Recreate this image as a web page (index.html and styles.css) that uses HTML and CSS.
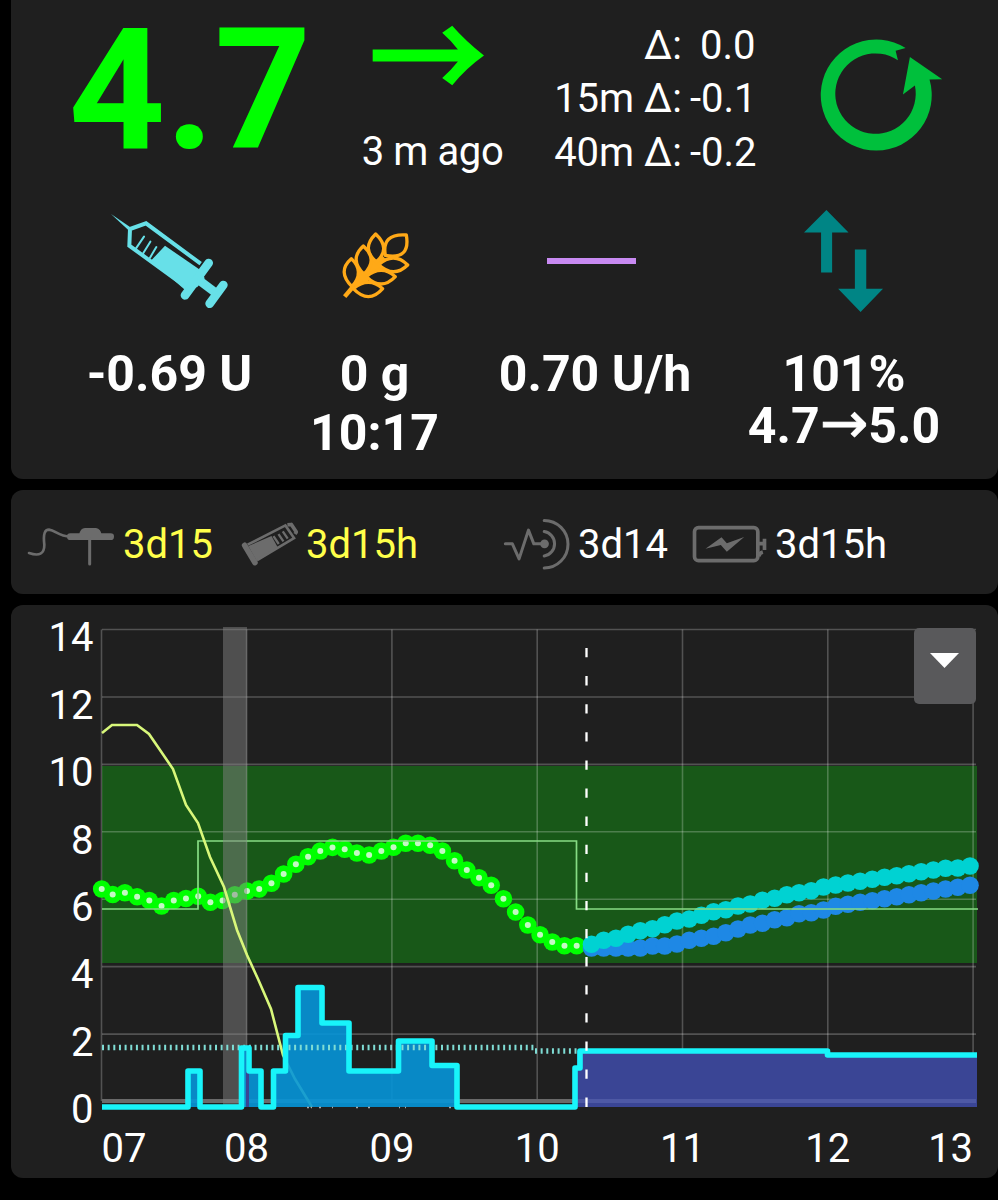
FILE: index.html
```html
<!DOCTYPE html>
<html lang="en">
<head>
    <meta charset="UTF-8">
    <meta name="viewport" content="width=device-width, initial-scale=1.0">
    <title>Overview</title>
    <link rel="stylesheet" href="styles.css">
</head>
<body>
    <section class="card overview">
        <div class="top-row">
            <div class="bg-value">4.7</div>
            <div class="trend">
                <svg class="trend-arrow" viewBox="0 0 338 182"><path fill="#00ff00" d="M2 73H257Q235 45 210 23L240 2Q280 48 335 91Q280 130 240 180L210 158Q235 137 257 109H2Z"/></svg>
                <div class="ago">3 m ago</div>
            </div>
            <div class="deltas">
                <span class="delta-label">Δ:</span><span class="delta-zero">0.0</span>
                <span class="delta-label">15m Δ:</span><span>-0.1</span>
                <span class="delta-label">40m Δ:</span><span>-0.2</span>
            </div>
            <svg class="loop-icon" viewBox="0 0 372 340"><path fill="#00c03c" d="M260 30L230 38L237 67A121 121 0 1 0 288 143L252 170L273 57L370 124L332 125A167 167 0 1 1 260 30Z"/></svg>
        </div>

        <div class="info-row">
            <div class="info iob">
                <div class="info-icon">
                    <svg width="118" height="96" viewBox="0 0 354 288" fill="none" stroke="#67e0e8">
                        <path d="M3 3L60 42L54 50Z" fill="#67e0e8" stroke="none"/>
                        <path d="M272 152L108 31L60 48L58 98L228 222" stroke-width="12"/>
                        <path d="M165 98L272 172L284 196L262 222L226 232L124 142Z" fill="#67e0e8" stroke="none"/>
                        <path d="M78 106L102 71M100 120L121 86M120 134L139 102" stroke-width="6" stroke-linecap="round"/>
                        <path d="M296 150L225 247M340 216L299 272" stroke-width="26" stroke-linecap="round"/>
                        <path d="M262 198L318 240" stroke-width="26"/>
                    </svg>
                </div>
                <div>-0.69 U</div>
            </div>
            <div class="info cob">
                <div class="info-icon">
                    <svg width="68" height="67" viewBox="0 0 204 201" fill="#1f1f1f" stroke="#ffa917" stroke-width="10" stroke-linejoin="round">
                        <path d="M8 194L30 168" stroke-width="13"/>
                        <path d="M36 160L126 76" stroke-width="38"/>
                        <path d="M130 70Q118 4 193 9Q206 84 130 70Z"/>
                        <path d="M103 90Q56 50 101 6Q148 50 103 90Z"/>
                        <path d="M66 126Q20 82 64 42Q110 84 66 126Z"/>
                        <path d="M30 164Q-16 118 28 80Q70 120 30 164Z"/>
                        <path d="M110 98Q155 58 197 99Q155 140 110 98Z"/>
                        <path d="M73 134Q118 96 160 134Q118 178 73 134Z"/>
                        <path d="M34 170Q80 132 122 170Q80 218 34 170Z"/>
                    </svg>
                </div>
                <div>0 g</div>
                <div>10:17</div>
            </div>
            <div class="info basal">
                <div class="info-icon"><div class="basal-line"></div></div>
                <div>0.70 U/h</div>
            </div>
            <div class="info sens">
                <div class="info-icon">
                    <svg width="79" height="102" viewBox="0 0 236 304" fill="#008585">
                        <path d="M0 67L67 0L133 67H84V186H51V67Z"/>
                        <path d="M152 118H186V235H236L169 304L102 235H152Z"/>
                    </svg>
                </div>
                <div>101%</div>
                <div class="target">4.7<span class="arrow">→</span>5.0</div>
            </div>
        </div>
    </section>

    <section class="card status">
        <div class="status-item warn">
            <svg width="88" height="40" viewBox="0 0 264 118" fill="none" stroke="#6c6c6c" stroke-width="8" stroke-linecap="round">
                <path d="M6 80Q52 96 52 56C48 20 54 10 66 10C86 12 94 30 130 31"/>
                <path d="M130 31H251" stroke-width="20"/>
                <path d="M156 26Q160 5 174 5H207Q222 8 224 26Z" fill="#6c6c6c" stroke="none"/>
                <path d="M188 34V113" stroke-width="9"/>
            </svg>
            <span>3d15</span>
        </div>
        <div class="status-item warn">
            <svg width="57" height="44" viewBox="0 0 172 132" fill="none" stroke="#6c6c6c">
                <path d="M11 70L42 122" stroke-width="17" stroke-linecap="round"/>
                <path d="M22 72L92 42L112 78L48 118Z" fill="#6c6c6c" stroke="none"/>
                <path d="M20 68L134 10L160 48L50 114" stroke-width="8"/>
                <path d="M140 8L152 7L167 30L163 36" stroke-width="11" stroke-linejoin="round"/>
                <path d="M98 42L114 66M113 36L128 58M126 28L141 50" stroke-width="7"/>
            </svg>
            <span>3d15h</span>
        </div>
        <div class="status-item">
            <svg width="67" height="52" viewBox="0 0 200 155" fill="none" stroke="#6c6c6c" stroke-width="9" stroke-linecap="round" stroke-linejoin="round">
                <path d="M7 77H28L48 122L76 36L92 77H121"/>
                <path d="M123 40A37 37 0 0 1 123 113M123 7A71 71 0 0 1 123 149"/>
                <circle cx="124" cy="77" r="13" fill="#6c6c6c" stroke="none"/>
            </svg>
            <span>3d14</span>
        </div>
        <div class="status-item">
            <svg width="75" height="38" viewBox="0 0 224 114" fill="none" stroke="#6c6c6c">
                <rect x="7" y="8" width="190" height="99" rx="12" stroke-width="11"/>
                <path d="M198 56H212M217 41V75M200 94Q202 84 212 81" stroke-width="11"/>
                <path d="M40 71L88 37L104 55L156 36L104 80L86 60Z" fill="#6c6c6c" stroke="none"/>
            </svg>
            <span>3d15h</span>
        </div>
    </section>

    <section class="card graph">
        <svg class="chart" viewBox="11 605 987 573">
            <rect class="in-range" x="102" y="766" width="875" height="197"/>
            <g id="grid"></g>
            <rect class="zero-line" x="102" y="1099" width="873" height="4"/>
            <g id="readings"></g>
            <g id="predictions"></g>
            <path class="target-line" d="M102 909H198V841H576.5V909H978"/>
            <rect class="treatment" x="223" y="627" width="24" height="480"/>
            <path class="cob-line" d="M102 733L112 725H137L149 734L173 769L186 805L198 823L210 857L224 887L237 930L247 955L258 979L271 1009L283 1055L295 1079L312 1107"/>
            <path class="basal-fill" d="M188 1107V1071H200V1107ZM241 1107V1048H249V1071H261V1107ZM273 1107V1071H285.5V1035H298V987H322V1023H349V1071H398V1041H432V1065H457V1107Z"/>
            <rect class="temp-fill" x="246" y="1050" width="3" height="57"/>
            <path class="temp-fill" d="M577 1107V1051H827.5V1055H977V1107Z"/>
            <rect class="zero-over" x="577" y="1099" width="399" height="4"/>
            <path class="profile-dots" d="M102 1047.5H535"/>
            <path class="profile-dots" d="M535 1051H580"/>
            <path class="basal-line-path" d="M102 1107H188V1071H200V1107H241.5V1048H249V1071H261V1107H273.5V1071H285.5V1035.5H298V987.5H322V1023H349V1071H398.5V1041H432V1065.5H457V1107H575V1068H580V1051H827.5V1055H977"/>
            <path class="noise" d="M307 1107.5h2M311 1107.5h1M319 1107.5h2M332 1107.5h1M356 1107.5h2M368 1107.5h2M399 1107.5h1M405 1107.5h1M449 1107.5h2"/>
            <path class="now-line" d="M586.5 648V1107"/>
            <g id="labels"></g>
        </svg>
        <button class="menu-button">
            <svg width="29" height="15" viewBox="0 0 29 15"><path fill="#fff" d="M0 0H29L14.5 15Z"/></svg>
        </button>
    </section>
    <script src="chart.js"></script>
</body>
</html>
```
FILE: styles.css
```css
body {
    margin: 0;
    background-color: #000;
    color: #fff;
    font-family: Roboto, "Liberation Sans", sans-serif;
    font-size: 40px;
    overflow: hidden;
}
.card {
    box-sizing: border-box;
    margin: 0 0 11px 11px;
    background-color: #1f1f1f;
    border-radius: 12px;
}
svg {
    display: block;
    flex-shrink: 0;
}
.overview {
    height: 479px;
    border-radius: 0 0 12px 12px;
}
.top-row {
    display: grid;
    grid-template-columns: 308px 169px 282px auto;
    column-gap: 8px;
    height: 200px;
    padding-left: 25px;
    box-sizing: border-box;
}
.bg-value {
    font-size: 169px;
    font-weight: bold;
    line-height: 180px;
    text-align: center;
    color: #00ff00;
}
.trend {
    display: flex;
    flex-direction: column;
    align-items: center;
    padding-top: 25px;
}
.trend-arrow {
    width: 113px;
    height: 61px;
    margin-right: 16px;
}
.ago {
    margin-top: 39px;
    margin-right: 8px;
    line-height: 54px;
    letter-spacing: -0.4px;
    white-space: nowrap;
}
.deltas {
    display: grid;
    grid-template-columns: 143px auto;
    grid-template-rows: repeat(3, 53.3px);
    column-gap: 8px;
    padding-top: 19px;
    padding-left: 10px;
    line-height: 53.3px;
    white-space: pre;
}
.delta-label {
    text-align: right;
}
.delta-zero {
    padding-left: 10px;
}
.loop-icon {
    width: 124px;
    height: 113px;
    margin-top: 38px;
}
.info-row {
    display: grid;
    grid-template-columns: 205px 205px 236px 262px;
    padding-left: 56px;
    font-size: 50px;
    font-weight: bold;
    line-height: 59px;
    text-align: center;
    white-space: nowrap;
}
.info-icon {
    display: flex;
    justify-content: center;
    align-items: center;
    height: 122px;
    margin-bottom: 23px;
}
.iob .info-icon {
    padding-right: 1px;
}
.basal-line {
    width: 89px;
    height: 6px;
    margin-right: 8px;
    background-color: #c88af2;
}
.cob .info-icon {
    padding-top: 9px;
    padding-left: 3px;
    height: 113px;
}
.sens .info-icon {
    padding-right: 2px;
}
.target {
    line-height: 44px;
}
.arrow {
    font-family: "Noto Sans", "DejaVu Sans", sans-serif;
    font-size: 58px;
    font-weight: 500;
    line-height: 0;
    -webkit-text-stroke: 0.8px #fff;
}
.status {
    display: grid;
    grid-template-columns: 214px 262px 189px auto;
    align-items: center;
    height: 104px;
    padding-left: 16px;
}
.status-item {
    display: flex;
    align-items: center;
    gap: 8px;
    padding-top: 5px;
}
.status-item svg {
    margin-bottom: 1px;
}
.status-item:first-child svg {
    margin-top: 4px;
}
.warn {
    color: #ffff4a;
}
.graph {
    position: relative;
    height: 573px;
    margin-bottom: 0;
}
.chart {
    width: 987px;
    height: 573px;
}
.chart text {
    fill: #fff;
    font-size: 40px;
}
.menu-button {
    position: absolute;
    top: 23px;
    left: 903px;
    width: 62px;
    height: 76px;
    padding: 0 0 12px 16px;
    border: none;
    border-radius: 5px;
    background-color: #59595b;
}
.grid-line {
    stroke: rgba(255, 255, 255, 0.23);
    stroke-width: 1.6;
}
.in-range {
    fill: #185818;
}
.zero-line {
    fill: #6a6a6a;
}
.zero-over {
    fill: rgba(110, 120, 190, 0.4);
}
.reading {
    fill: #00ff00;
}
.reading-core {
    fill: #c4f9c4;
}
.pred-low {
    fill: #1e88e5;
}
.pred-high {
    fill: #00d2d2;
}
.target-line {
    fill: none;
    stroke: #86dc84;
    stroke-width: 1.7;
}
.treatment {
    fill: rgba(128, 128, 128, 0.5);
}
.cob-line {
    fill: none;
    stroke: #d8f77a;
    stroke-width: 2.6;
}
.basal-fill {
    fill: rgba(6, 149, 216, 0.9);
}
.temp-fill {
    fill: #3a4595;
}
.profile-dots {
    stroke: #7fdcd4;
    stroke-width: 5.5;
    stroke-dasharray: 2 3.65;
}
.noise {
    stroke: #aaa;
    stroke-width: 1.5;
}
.basal-line-path {
    fill: none;
    stroke: #18f4fa;
    stroke-width: 5.6;
    stroke-linejoin: round;
}
.now-line {
    stroke: #fff;
    stroke-width: 2.3;
    stroke-dasharray: 9.3 18.8;
}
```
FILE: chart.js
```js
const STEP = 12.21;
const DOT = 8.8;

function add(parent, name, attrs, text) {
    const el = document.createElementNS("http://www.w3.org/2000/svg", name);
    for (const key in attrs) el.setAttribute(key, attrs[key]);
    if (text !== undefined) el.textContent = text;
    document.getElementById(parent).appendChild(el);
}

// grid and axis labels
for (let v = 0; v <= 14; v += 2) {
    const y = 1101.5 - v * 33.71;
    if (v > 0) add("grid", "line", { class: "grid-line", x1: 102, x2: 976, y1: y, y2: y });
    add("labels", "text", { x: 93.5, y: y + 21.8, "text-anchor": "end" }, v);
}
["07", "08", "09", "10", "11", "12", "13"].forEach((hour, i) => {
    const x = i === 0 ? 101.5 : 101.3 + i * 145.3;
    add("grid", "line", { class: "grid-line", x1: x, x2: x, y1: 629.5, y2: 1101 });
    const anchor = i === 0 ? "start" : i === 6 ? "end" : "middle";
    add("labels", "text", { x: x, y: 1162, "text-anchor": anchor }, hour);
});

// glucose readings, one every five minutes
const readings = [
    889, 894.5, 892.7, 896.7, 900.5, 906, 900.5, 898.5, 896.3, 902.3,
    900.5, 894.7, 891, 889, 883.3, 874, 864.3, 856.7, 851, 847.4,
    849.3, 853, 855, 851, 847.3, 843.3, 843.3, 845.3, 851, 860.7,
    870, 877.7, 885.3, 898.7, 912, 925, 934.7, 942, 945.7, 945.7
];
const readingX = i => i === 0 ? 101.7 : 112.7 + (i - 1) * STEP;
readings.forEach((y, i) => add("readings", "circle", { class: "reading", cx: readingX(i), cy: y, r: DOT }));
readings.forEach((y, i) => add("readings", "circle", { class: "reading-core", cx: readingX(i), cy: y, r: 3 }));

// predictions
const low = [
    948, 948, 948, 948, 948, 946, 946, 944, 940.3, 938.3, 936.3, 932.7,
    929, 925, 923.3, 919.7, 917.7, 913.7, 912.7, 910, 906.3, 904.3, 902.3,
    900.7, 898.7, 896.7, 894.7, 892.7, 891, 889, 887.3, 885.3
];
const high = [
    944.3, 940.3, 938.3, 934.3, 930.7, 928.7, 924.7, 921, 919, 915.3, 911.7,
    909.7, 906, 904, 900.3, 898.3, 894.7, 892.7, 890.7, 887, 885, 883, 881.3,
    879.3, 877.3, 875.7, 873.7, 871.7, 870, 868.3, 868, 866
];
low.forEach((y, i) => add("predictions", "circle", { class: "pred-low", cx: 591.5 + i * STEP, cy: y, r: DOT }));
high.forEach((y, i) => add("predictions", "circle", { class: "pred-high", cx: 591.5 + i * STEP, cy: y, r: DOT }));
```
